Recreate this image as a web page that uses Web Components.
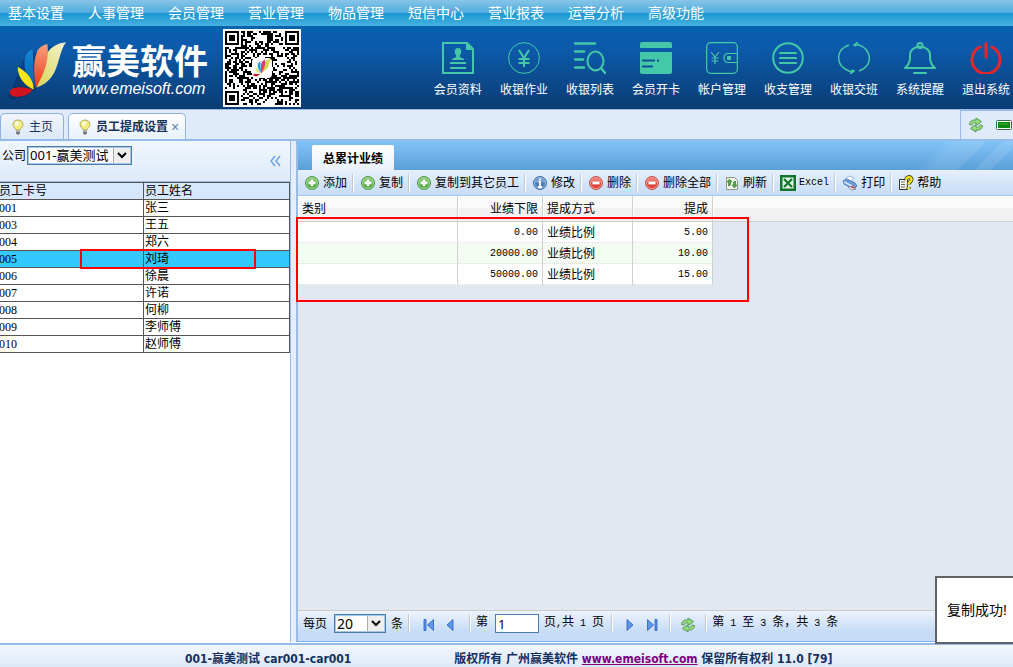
<!DOCTYPE html>
<html lang="zh-CN">
<head>
<meta charset="utf-8">
<title>赢美软件</title>
<style>
html, body { margin: 0; height: 100%; }
body { font: 12px/16px "Liberation Sans", "Noto Sans CJK SC", sans-serif; color: #000; overflow: hidden; --line: #99bbe8; --accent: #45c8a8; }
</style>
</head>
<body>
<app-shell></app-shell>
<script>
const define = (tag, css, html) => customElements.define(tag, class extends HTMLElement {
  connectedCallback() {
    if (this.shadowRoot) return;
    const t = document.createElement('template');
    t.innerHTML = `<style>*{box-sizing:border-box}${css}</style>` + (typeof html === 'function' ? html(this) : html);
    this.attachShadow({ mode: 'open' }).append(t.content.cloneNode(true));
  }
});

const stroke = w => `fill="none" stroke="currentColor" stroke-width="${w}"`;
const recycle = (light, dark) => `<g fill="${light}" stroke="${dark}" stroke-width="1" stroke-linejoin="round"><path d="M1.500 7.500C1.500 4 4.500 2.500 8 3V1l5.500 3.500-2 2-3.500 1.500V6C6 5.500 4.500 6 4 8z"/><path d="M14.500 8.500C14.500 12 11.500 13.500 8 13v2l-5.500-3.500 2-2L8 8v2c2 .5 3.500 0 4-2z"/></g>`;
const round = (a, b, edge, mark) => `<circle cx="8" cy="8" r="6.500" fill="${a}" stroke="${edge}"/><circle cx="8" cy="8" r="5.600" fill="none" stroke="${b}"/><path d="M2.500 8a5.500 5.500 0 0 1 11 0q-5.500-2-11 0" fill="${b}" opacity=".6"/>${mark}`;
const icons = {
  member: [32, `<g ${stroke(2)}><path d="M1 1H25L31 7V31H1z"/><path d="M8 21H24M8 26H24"/></g><path fill="currentColor" d="M24 1l7 7h-7zM16 6c4 0 4 5 1.800 7.500V15l4.200 2v1H10v-1l4.200-2v-1.500C12 11 12 6 16 6"/>`],
  yen: [32, `<g ${stroke(1)}><circle cx="16" cy="16" r="15.400"/></g><path ${stroke(2)} d="M11 8l5 8 5-8M16 16v9M10.500 17h11M10.500 21h11"/>`],
  search: [32, `<path ${stroke(2.4)} stroke-linecap="round" d="M1 1.500h20M1 9.500h9M1 17.500h8M1 25.500h9"/><ellipse cx="21.500" cy="19" rx="8" ry="9.500" ${stroke(2)}/><path ${stroke(2.4)} d="M27 26l5 6"/>`],
  card: [32, `<path fill="currentColor" d="M2 0h28q2 0 2 2v4H0V2q0-2 2-2M0 10h32v20q0 2-2 2H2q-2 0-2-2z"/><path d="M2 18.500h13M17 18.500h2M2 24.500h11" stroke="#10509a" stroke-width="2"/>`],
  wallet: [32, `<g ${stroke(1.2)}><rect x=".7" y=".7" width="30.600" height="30.600" rx="4"/><path d="M31 11.500H22q-4 0-4 4.500t4 4.500h9M5 10l4 5 4-5M9 15v7M5.500 16h7M5.500 19h7"/></g><rect x="21" y="14" width="4" height="4" rx="1" fill="currentColor"/>`],
  list: [32, `<circle cx="16" cy="16" r="14.800" ${stroke(2)}/><path ${stroke(2.2)} stroke-linecap="round" d="M8 11h16M8 16h16M8 21h16"/>`],
  swap: [32, `<g ${stroke(1.500)}><path d="M11 3C-3 8-3 24 12 29.500l4-.5M21 29C35 24 35 8 20 2.500L16 3M20 0l-4 3 2.500 1M12 32l4-3-2.500-1"/></g>`],
  bell: [32, `<g ${stroke(2)}><circle cx="16" cy="3.500" r="2.500"/><path stroke-linejoin="round" d="M6 13C6 2 26 2 26 13v4q1 6 5 9H1q4-3 5-9z"/><path stroke-linecap="round" d="M10 31h12"/></g>`],
  power: [32, `<g fill="none" stroke="#e8262a" stroke-width="3" stroke-linecap="round"><path d="M10 5a14 14 0 1 0 12 0M16 1.500V15"/></g>`],
  bulb: [16, `<path d="M8 1C5 1 3 3 3 5.600 3 8 5.500 9 6 11h4c.5-2 3-3 3-5.400C13 3 11 1 8 1z" fill="#f3ec76" stroke="#b5ac65"/><ellipse cx="7" cy="4.500" rx="2" ry="2.500" fill="#fffde0"/><path d="M6 11h4v3.500L8 16l-2-1.500z" fill="#777"/><path d="M6 12h4" stroke="#ddd"/>`],
  refresh2: [16, recycle('#94d77c', '#579b5b')],
  battery: [16, `<rect x=".5" y="3.500" width="15" height="9" rx="1" fill="#fff" stroke="#356b40"/><rect x="2" y="5" width="12" height="6" fill="#0b8a12"/><path d="M3 7h9" stroke="#3db63b"/>`],
  add: [16, round('#53a947', '#a5d893', '#4d9144', '<path d="M8 4.500v7M4.500 8h7" stroke="#fff" stroke-width="2.400"/>')],
  info: [16, round('#4c7dbd', '#93b6e0', '#4a70a5', '<path d="M8 3.500v2M6.500 7H8v5M6 12h4" fill="none" stroke="#fff" stroke-width="1.800"/>')],
  del: [16, round('#df4339', '#f59c92', '#c0524a', '<path d="M4.500 8h7" stroke="#fff" stroke-width="2.800"/>')],
  reload: [16, `<path d="M2.500 2.500h8l3 3v9h-11z" fill="#f4f4ee" stroke="#8c9581"/><path d="M4.500 11V7H3l2.500-3L8 7H6.500v3zM11.500 6v4H13l-2.500 3L8 10h1.500V7z" fill="#57a449" stroke="#2b7726" stroke-width=".6"/>`],
  excel: [16, `<path d="M0 0h16v16H0z" fill="#11752d"/><path d="M2.500 2.500h11v11h-11z" fill="#e7f5e7"/><path d="M4 4l8 8M12 4l-8 8" stroke="#167a30" stroke-width="2.400"/>`],
  print: [16, `<path d="M3 4l4-3 5 2-3 4z" fill="#fff" stroke="#8eb6df"/><path d="M1 6l4-2 8 4 2 3-4 3-9-5z" fill="#6d9cdc" stroke="#3e6cad" stroke-width=".8"/><path d="M2 7l8 4" stroke="#d8e8fb" stroke-width="1.500"/><path d="M6 12l4 3 4-1-3-3z" fill="#fff" stroke="#889"/><path d="M9 12l4 1" stroke="#b84c50" stroke-width="1.500"/>`],
  help: [16, `<path d="M1.500 4.500h8v10h-8z" fill="#f8f8ec" stroke="#333"/><path d="M3 7h4M3 9.500h4M3 12h4" stroke="#666"/><path d="M8.500 5C7.500 1.500 13.500 1 13.500 4.500c0 2-3 2.500-3 5M10.500 12v2" fill="none" stroke="#413b00" stroke-width="4"/><path d="M8.500 5C7.500 1.500 13.500 1 13.500 4.500c0 2-3 2.500-3 5M10.500 12v2" fill="none" stroke="#f8e91c" stroke-width="2.400"/>`],
  first: [16, `<path d="M3 2.500h2v11H3zM12.500 2.500v11L6.500 8z" fill="#5d97e6" stroke="#2a60ba" stroke-width=".8"/>`],
  prev: [16, `<path d="M11 2.500v11L5 8z" fill="#5d97e6" stroke="#2a60ba" stroke-width=".8"/>`],
  next: [16, `<path d="M5 2.500v11L11 8z" fill="#5d97e6" stroke="#2a60ba" stroke-width=".8"/>`],
  last: [16, `<path d="M11 2.500h2v11h-2zM3.500 2.500v11L9.500 8z" fill="#5d97e6" stroke="#2a60ba" stroke-width=".8"/>`]
};
const petals = `<path fill="url(#p1)" d="M108 262C120 240 122 200 140 160 152 138 175 128 197 126 180 150 178 180 165 210 152 240 130 255 108 262"/><path fill="url(#p2)" d="M106 262C100 220 98 180 112 150 120 138 130 133 141 131 146 165 140 210 106 262"/><path fill="url(#p3)" d="M103 262C85 235 65 205 75 170 80 156 88 150 97 146 98 180 100 220 103 262"/><path fill="#f9e51a" d="M100 268C72 255 52 230 52 200 75 210 100 235 100 268"/><path fill="#d3141f" d="M97 268C85 285 60 292 38 288 25 284 25 270 38 264 60 258 80 262 97 268"/>`;
const petalDefs = `<defs><linearGradient id="p1" x1="1" y1="0" x2="0" y2="1"><stop stop-color="#f5f3d2"/><stop offset="1" stop-color="#d9d552"/></linearGradient><linearGradient id="p2" x1="0" y1="0" x2="0" y2="1"><stop stop-color="#f9a27c"/><stop offset="1" stop-color="#e8361c"/></linearGradient><linearGradient id="p3" x1="0" y1="0" x2="0" y2="1"><stop stop-color="#1187d6"/><stop offset="1" stop-color="#0a63a8"/></linearGradient></defs>`;

define('app-icon', ':host{display:block;flex:none}svg{display:block}', el => {
  const [s, d] = icons[el.getAttribute('name')];
  return `<svg width="${s}" height="${s}" viewBox="0 0 ${s} ${s}" aria-hidden="true">${d}</svg>`;
});

define('qr-code', ':host{display:grid;flex:none;width:78px;height:78px;place-items:center;background:#fff}svg{display:block;grid-area:1/1}.mid{background:#fff;border-radius:4px}', () => {
  const n = 37; let seed = 20177, d = '';
  const rnd = () => (seed = (seed * 1103515245 + 12345) % 2147483648) / 2147483648;
  const finder = (x, y) => { const m = Math.max(Math.abs(x - 3), Math.abs(y - 3)); return m === 3 || m < 2; };
  for (let y = 0; y < n; y++) for (let x = 0; x < n; x++) {
    let on = rnd() < .5;
    if (x < 8 && y < 8) on = x < 7 && y < 7 && finder(x, y);
    else if (x > 28 && y < 8) on = x > 29 && y < 7 && finder(x - 30, y);
    else if (x < 8 && y > 28) on = x < 7 && y > 29 && finder(x, y - 30);
    else if (x > 27 && x < 33 && y > 27 && y < 33) { const m = Math.max(Math.abs(x - 30), Math.abs(y - 30)); on = m !== 1; }
    if (on) d += `M${x} ${y}h1v1h-1z`;
  }
  return `<svg width="74" height="74" viewBox="0 0 37 37" shape-rendering="crispEdges" role="img" aria-label="二维码"><path d="${d}"/></svg>
  <svg class="mid" width="20" height="20" viewBox="20 118 185 185" aria-hidden="true"><path fill="#d6d84b" d="M108 262C120 240 122 200 140 160 152 138 175 128 197 126 180 150 178 180 165 210z"/><path fill="#e23c79" d="M106 262C100 220 98 180 112 150L141 131C146 165 140 210 106 262"/><path fill="#2a9ade" d="M103 262C85 235 65 205 75 170L97 146z"/><path fill="#f9d51a" d="M100 268C72 255 52 230 52 200z"/><path fill="#d3141f" d="M97 268L60 288 30 280 38 264z"/></svg>`;
});

define('menu-bar', `
:host{display:block;background:linear-gradient(#87c5e8 0,#4eabdc 13px,#1b96d2 13px,#46b1de 26px)}
nav{display:flex;gap:24px;height:26px;padding-left:8px;align-items:center}
a{color:#fff;font-size:14px;line-height:20px;white-space:nowrap;text-decoration:none}`,
`<nav>${['基本设置','人事管理','会员管理','营业管理','物品管理','短信中心','营业报表','运营分析','高级功能'].map(t => `<a href="#">${t}</a>`).join('')}</nav>`);

define('nav-button', `
:host{display:block}
button{display:flex;flex-direction:column;align-items:center;gap:8px;padding:0;border:0;background:none;font:inherit;color:#fff;white-space:nowrap}
app-icon{color:var(--accent)}`,
el => `<button type="button"><app-icon name="${el.getAttribute('icon')}"></app-icon><slot></slot></button>`);

define('app-header', `
:host{display:flex;height:83px;padding:3px 3px 0 7px;background:linear-gradient(#0562ab 0,#0762ad 6px,#0d5baf 7px,#0c5aa9 24px,#0a3c73 100%);color:#fff}
.logo{flex:none;margin-top:12px}
.brand{flex:none;width:156px;padding:15px 0 0 5px}
.brand b{display:block;font-size:34px;line-height:36px;white-space:nowrap}
.brand i{display:block;font-size:16px;line-height:18px}
.actions{display:flex;gap:18px;margin:13px 0 0 auto}`,
`<svg class="logo" width="60" height="59" viewBox="20 122 180 177" role="img" aria-label="赢美">${petalDefs}<g opacity=".3" transform="translate(-6 8)"><path fill="#001b3d" d="M97 268C85 285 60 292 38 288 25 284 25 270 38 264L75 170 97 146 112 150 141 131 197 126 165 210 108 262z"/></g>${petals}</svg>
<div class="brand"><b>赢美软件</b><i>www.emeisoft.com</i></div>
<qr-code></qr-code>
<div class="actions">${[['member','会员资料'],['yen','收银作业'],['search','收银列表'],['card','会员开卡'],['wallet','帐户管理'],['list','收支管理'],['swap','收银交班'],['bell','系统提醒'],['power','退出系统']].map(([i, t]) => `<nav-button icon="${i}">${t}</nav-button>`).join('')}</div>`);

define('page-tab', `
:host{display:flex;align-items:center;height:26px;padding:0 10px 0 9px;gap:3px;border:1px solid #8db2e3;border-bottom:0;border-radius:5px 5px 0 0;background:linear-gradient(#f1f6fd,#dbe8f8);color:#16325c}
:host([active]){background:linear-gradient(#fff,#e8f1fc);font-weight:bold;padding:0 6px 0 8px}
button{border:0;padding:0;background:none;font:inherit;color:inherit;white-space:nowrap}
.x{font:14px/16px "Liberation Sans",sans-serif;color:#5c82b6}`,
el => `<app-icon name="bulb"></app-icon><button type="button"><slot></slot></button>${el.hasAttribute('active') ? '<button type="button" class="x" aria-label="关闭">×</button>' : ''}`);

define('tab-strip', `
:host{display:flex;align-items:flex-end;gap:4px;height:32px;background:#dfeafa;border-top:1px solid var(--line);border-bottom:2px solid #95bce9}
.tools{align-self:stretch;display:flex;gap:12px;align-items:center;margin-left:auto;width:53px;padding-left:7px;border:1px solid var(--line);border-width:1px 0 0 1px;overflow:hidden}`,
`<page-tab>主页</page-tab><page-tab active>员工提成设置</page-tab><div class="tools"><app-icon name="refresh2"></app-icon><app-icon name="battery"></app-icon></div>`);

const selectCss = `select{appearance:none;height:19px;border:1px solid #4a7eb0;outline:1px solid #a9c6e0;outline-offset:-2px;border-radius:0;padding:0 0 0 2px;font:14px/17px "Noto Sans","Noto Sans CJK SC",sans-serif;color:#000;
background:#fff url("data:image/svg+xml,%3Csvg xmlns='http://www.w3.org/2000/svg' width='18' height='17'%3E%3Cpath d='M.5.5h17v16H.5z' fill='%23eee' stroke='%23aaa'/%3E%3Cpath d='M5 6l4 4 4-4' fill='none' stroke='%23000' stroke-width='2'/%3E%3C/svg%3E") no-repeat right center}`;

define('staff-panel', `
:host{display:flex;flex-direction:column;flex:none;width:291px;border-right:1px solid var(--line);background:#fff;position:relative;overflow:hidden}
.top{display:flex;justify-content:space-between;height:41px;padding:5px 9px 0 2px;background:linear-gradient(#f0f6fd,#deeafa);border-bottom:1px solid var(--line)}
label{display:flex;gap:1px;line-height:20px;align-items:flex-start}
.top button{align-self:flex-start;margin-top:9px;padding:0;border:0;background:none}
.top svg{display:block}
${selectCss} select{width:105px;font-size:13px}
table{border-collapse:collapse;table-layout:fixed;width:291px;margin-left:-1px;height:169px}
th,td{border:1px solid #555;padding:1px 0 0 1px;text-align:left;font-weight:normal;line-height:15px;height:16px;white-space:nowrap}
td:first-child,th:first-child{padding-left:0;text-indent:-1px}
td:first-child{font-family:"Liberation Serif",serif}
th{background:#d5e8fe}
.on td{background:#33c9ff}
.mark{position:absolute;left:80px;top:108px;width:176px;height:20px;border:2px solid #f00}`,
`<div class="top"><label>公司<select><option>001-赢美测试</option></select></label><button type="button" aria-label="收起"><svg width="12" height="12" viewBox="0 0 12 12" fill="none" stroke="#6ba4e0" stroke-width="1.500"><path d="M6 1L2 6l4 5M11 1L7 6l4 5"/></svg></button></div>
<table><colgroup><col style="width:144px"><col></colgroup><thead><tr><th>员工卡号</th><th>员工姓名</th></tr></thead><tbody>${[['001','张三'],['003','王五'],['004','郑六'],['005','刘琦'],['006','徐晨'],['007','许诺'],['008','何柳'],['009','李师傅'],['010','赵师傅']].map(([a, b]) => `<tr${a === '005' ? ' class="on"' : ''}><td>${a}</td><td>${b}</td></tr>`).join('')}</tbody></table><div class="mark"></div>`);

define('tool-button', `
:host{display:flex;align-items:center;height:18px;padding:0 6px;border-right:1px solid #fff;box-shadow:inset -1px 0 #c4c9d0}
:host(:last-child){border:0;box-shadow:none}
button{display:flex;align-items:center;gap:3px;padding:0;border:0;background:none;font:inherit;white-space:nowrap}`,
el => `<button type="button"><app-icon name="${el.getAttribute('icon')}"></app-icon><slot></slot></button>`);

const mono = '.m{font:10px/16px "Liberation Mono",monospace;white-space:pre}';

define('pager-bar', `
:host{display:flex;align-items:flex-start;height:32px;padding:3px 0 0 5px;border-top:1px solid #ccc;border-bottom:1px solid #7eb0ee;background:linear-gradient(#edf3fc,#c8ddf7 65%,#c4dbf7);line-height:16px;white-space:nowrap}
${selectCss} select{width:52px;margin:0 5px 0 7px}
label{display:flex}
.low{line-height:20px}
.sep{flex:none;width:2px;height:18px;background:linear-gradient(90deg,#c4c9d0 1px,#fff 1px);margin:0 5px}
button{padding:0;border:0;background:none;margin-top:3px}
input{width:44px;height:19px;margin:0 5px 0 7px;border:1px solid #4a7eb0;padding:0 2px;font:13px/17px "Noto Sans",sans-serif}
${mono}`,
`<label class="low">每页<select aria-label="每页条数"><option>20</option></select>条</label><i class="sep"></i>
<button type="button" aria-label="首页" style="margin-left:6px"><app-icon name="first"></app-icon></button><button type="button" aria-label="上一页" style="margin-left:5px"><app-icon name="prev"></app-icon></button><i class="sep" style="margin-left:11px"></i>
<label>第<input value="1"></label><span>页<span class="m">,</span>共<span class="m"> 1 </span>页</span><i class="sep" style="margin-left:7px"></i>
<button type="button" aria-label="下一页" style="margin-left:4px"><app-icon name="next"></app-icon></button><button type="button" aria-label="末页" style="margin-left:6px"><app-icon name="last"></app-icon></button><i class="sep" style="margin-left:9px"></i>
<button type="button" aria-label="刷新" style="margin-left:4px"><app-icon name="refresh2"></app-icon></button><i class="sep" style="margin-left:9px"></i>
<span>第<span class="m"> 1 </span>至<span class="m"> 3 </span>条，共<span class="m"> 3 </span>条</span>`);

define('work-panel', `
:host{display:flex;flex-direction:column;flex:1;min-width:0;border-left:2px solid var(--line);background:#e1e8f2;position:relative}
.tabs{flex:none;height:29px;padding:4px 14px 0;background:linear-gradient(135deg,transparent 30%,#ffffff18 40% 60%,transparent 60% 72%,#ffffff18 72% 84%,transparent 84%) right/110px 100% no-repeat,linear-gradient(#82c4f8,#5b9fd8)}
.tabs button{display:block;width:82px;height:25px;padding:2px 0 0;border:0;border-radius:2px 2px 0 0;background:linear-gradient(#fff,#e9f1fb);font:inherit;font-weight:bold}
.tools{flex:none;display:flex;height:26px;padding:4px 0 0;border-bottom:1px solid #a5c8f0;background:linear-gradient(#e6effb,#c6dcf7)}
table{border-collapse:separate;border-spacing:0;table-layout:fixed;width:100%}
th{height:26px;padding:0 4px;font-weight:normal;text-align:left;background:linear-gradient(#fafafa 50%,#f1f1f1 50%);border-right:1px solid #d0d0d0;border-bottom:1px solid #d0d0d0;box-shadow:inset 1px 0 #fff}
th:last-child{border-right:0}
td{height:21px;padding:1px 4px 0;background:#fff;border-right:1px solid #d0d0d0;border-bottom:1px dotted #ddd;line-height:18px}
tr:nth-child(even) td{background:#f4fbf3}
tbody td:last-child{background:none!important;border:0}
.r{text-align:right}
.mark{position:absolute;left:-2px;top:76px;width:453px;height:85px;border:2px solid #f00}
pager-bar{margin-top:auto}
${mono}`,
`<div class="tabs"><button type="button">总累计业绩</button></div>
<div class="tools"><tool-button icon="add">添加</tool-button><tool-button icon="add">复制</tool-button><tool-button icon="add">复制到其它员工</tool-button><tool-button icon="info">修改</tool-button><tool-button icon="del">删除</tool-button><tool-button icon="del">删除全部</tool-button><tool-button icon="reload">刷新</tool-button><tool-button icon="excel"><span class="m">Excel</span></tool-button><tool-button icon="print">打印</tool-button><tool-button icon="help">帮助</tool-button></div>
<table><colgroup><col style="width:160px"><col style="width:85px"><col style="width:90px"><col style="width:80px"><col></colgroup>
<thead><tr><th>类别</th><th class="r">业绩下限</th><th>提成方式</th><th class="r">提成</th><th></th></tr></thead>
<tbody>${[['0.00','5.00'],['20000.00','10.00'],['50000.00','15.00']].map(([a, b]) => `<tr><td></td><td class="r m">${a}</td><td>业绩比例</td><td class="r m">${b}</td><td></td></tr>`).join('')}</tbody></table>
<div class="mark"></div><pager-bar></pager-bar>`);

define('app-footer', `
:host{display:flex;gap:103px;height:24px;padding:5px 0 0 185px;border-top:2px solid #95bce9;background:linear-gradient(#f1f6fd,#dde9f9);color:#15305e;font:bold 12px/18px "DejaVu Sans Condensed","Noto Sans CJK SC",sans-serif;white-space:nowrap}
a{color:#800080}`,
`<span>001-赢美测试 car001-car001</span><span>版权所有 广州赢美软件 <a href="#">www.emeisoft.com</a> 保留所有权利 11.0 [79]</span>`);

define('toast-note', `
:host{position:absolute;right:0;bottom:23px;width:78px;height:68px;display:flex;align-items:center;padding-left:10px;background:#fff;border:2px solid #606266;border-right:0;font-size:14px;white-space:nowrap}`, `<slot></slot>`);

define('app-shell', `
:host{display:flex;flex-direction:column;height:100vh;position:relative}
main{flex:1;min-height:0;display:flex;gap:5px;background:#e4eefb;border-bottom:1px solid #fff}`,
`<menu-bar></menu-bar><app-header></app-header><tab-strip></tab-strip><main><staff-panel></staff-panel><work-panel></work-panel></main><app-footer></app-footer><toast-note role="status">复制成功!</toast-note>`);
</script>
</body>
</html>
